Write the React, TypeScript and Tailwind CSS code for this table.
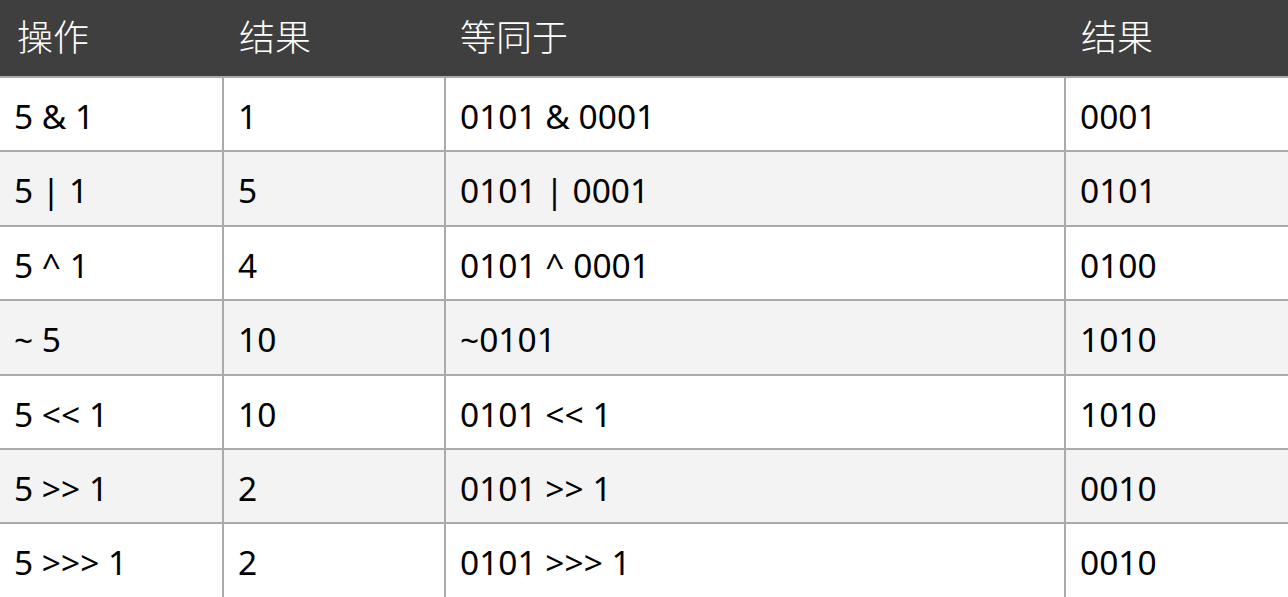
import React from "react";

const rows = [
  ["5 & 1", "1", "0101 & 0001", "0001"],
  ["5 | 1", "5", "0101 | 0001", "0101"],
  ["5 ^ 1", "4", "0101 ^ 0001", "0100"],
  ["~ 5", "10", "~0101", "1010"],
  ["5 << 1", "10", "0101 << 1", "1010"],
  ["5 >> 1", "2", "0101 >> 1", "0010"],
  ["5 >>> 1", "2", "0101 >>> 1", "0010"],
];

const widths = ["w-[222px]", "w-[222px] border-l-2", "w-[620px] border-l-2", "w-[224px] border-l-2"];

const App = () => {
  return (
    <div
      className="w-[1288px] h-[597px] overflow-hidden bg-white"
      style={{ fontFamily: '"Noto Sans", "Noto Sans CJK SC", sans-serif' }}
    >
      <div className="flex h-[76px] bg-[#3f3f3f] text-white text-[36px] font-light items-center">
        <div className="w-[222px] pl-[17px]">操作</div>
        <div className="w-[222px] pl-[17px]">结果</div>
        <div className="w-[620px] pl-[16px]">等同于</div>
        <div className="w-[224px] pl-[17px]">结果</div>
      </div>
      {rows.map((row, i) => (
        <div
          key={i}
          className={`flex h-[74.4px] border-t-2 border-[#aaaaaa] ${i % 2 === 1 ? "bg-[#f3f3f3]" : "bg-white"}`}
        >
          {row.map((cell, j) => (
            <div
              key={j}
              className={`${widths[j]} border-[#aaaaaa] flex items-center pl-[14px] pt-[4px] text-[33.5px] text-black whitespace-pre`}
            >
              {cell}
            </div>
          ))}
        </div>
      ))}
    </div>
  );
};

export default App;
